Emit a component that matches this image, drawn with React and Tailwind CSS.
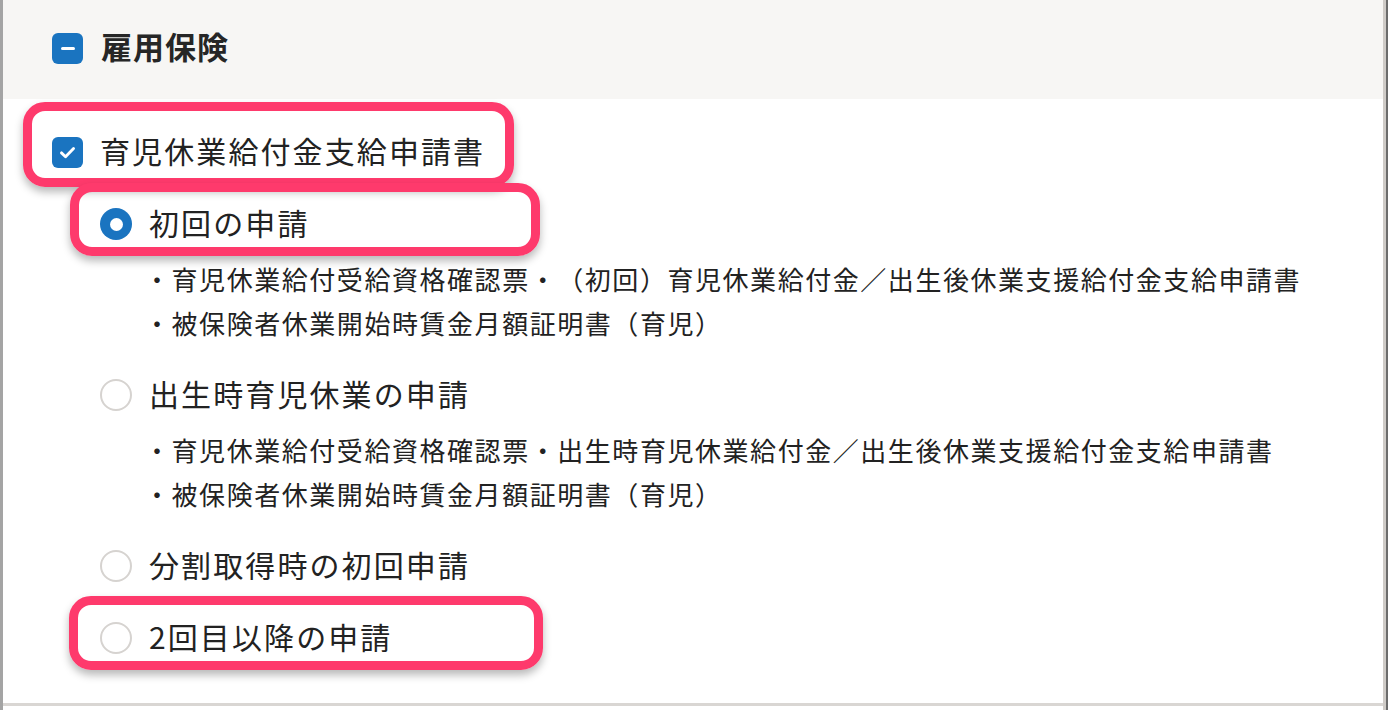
const font = { fontFamily: '"Noto Sans CJK JP", "Noto Sans", sans-serif' };

function Checkbox({ mode }) {
  return (
    <span className="w-[31px] h-[31px] shrink-0 rounded-[6px] bg-[#1a74c0] flex items-center justify-center">
      {mode === 'minus' ? (
        <span className="w-[14px] h-[3px] rounded-full bg-white" />
      ) : (
        <svg viewBox="0 0 16 16" className="w-[21px] h-[21px]" fill="none">
          <path d="M3.4 8.3 L6.5 11.2 L12.6 5" stroke="white" strokeWidth="2.2" strokeLinecap="round" strokeLinejoin="round" />
        </svg>
      )}
    </span>
  );
}

function Radio({ checked }) {
  return checked ? (
    <span className="w-[32px] h-[32px] shrink-0 rounded-full bg-[#1a74c0] flex items-center justify-center">
      <span className="w-[13px] h-[13px] rounded-full bg-white" />
    </span>
  ) : (
    <span className="w-[32px] h-[32px] shrink-0 rounded-full border-2 border-[#d6d3d0] bg-white" />
  );
}

function RadioRow({ checked, label }) {
  return (
    <div className="h-[72px] flex items-center gap-[17px] pl-[97px]">
      <Radio checked={checked} />
      <span className="pb-[4px] text-[30px] tracking-[2.1px] text-[#222]">{label}</span>
    </div>
  );
}

function Docs({ lines }) {
  return (
    <ul className="-mt-[3px] mb-[14px] pl-[141px] text-[26px] leading-[44px] tracking-[1.55px] text-[#222] [text-spacing-trim:space-all]">
      {lines.map((l) => (
        <li key={l}>・{l}</li>
      ))}
    </ul>
  );
}

function Mark({ className }) {
  return (
    <div
      className={`absolute border-[9px] border-[#fe3a6c] rounded-[22px] shadow-[0_5px_8px_rgba(0,0,0,0.28)] pointer-events-none ${className}`}
    />
  );
}

export default function App() {
  return (
    <div className="relative w-[1388px] h-[710px] overflow-hidden bg-[#6c6c6c] flex" style={font}>
      <div className="w-[3px] bg-[#a4a4a4]" />
      <div className="flex-1 flex flex-col bg-white">
        <div className="h-[99px] bg-[#f7f6f4] flex items-center gap-[18px] pl-[49px] pb-[2px]">
          <Checkbox mode="minus" />
          <span className="pb-[4px] text-[31px] font-bold tracking-[1px] text-[#262626]">雇用保険</span>
        </div>

        <div className="pt-[17px] flex-1">
          <div className="h-[72px] flex items-center gap-[17px] pl-[49px]">
            <Checkbox mode="check" />
            <span className="pb-[4px] text-[30px] tracking-[2.1px] text-[#222]">育児休業給付金支給申請書</span>
          </div>

          <RadioRow checked label="初回の申請" />
          <Docs
            lines={[
              '育児休業給付受給資格確認票・（初回）育児休業給付金／出生後休業支援給付金支給申請書',
              '被保険者休業開始時賃金月額証明書（育児）',
            ]}
          />

          <RadioRow label="出生時育児休業の申請" />
          <Docs
            lines={[
              '育児休業給付受給資格確認票・出生時育児休業給付金／出生後休業支援給付金支給申請書',
              '被保険者休業開始時賃金月額証明書（育児）',
            ]}
          />

          <RadioRow label="分割取得時の初回申請" />
          <RadioRow label="2回目以降の申請" />
        </div>

        <div className="h-[3px] bg-[#d9d6d3]" />
        <div className="h-[4px] bg-white" />
      </div>
      <div className="w-[3px] bg-[#cfcbc7]" />
      <div className="w-[2px] bg-[#6c6c6c]" />

      <Mark className="left-[23px] top-[102px] w-[491px] h-[85px]" />
      <Mark className="left-[70px] top-[183px] w-[470px] h-[73px]" />
      <Mark className="left-[69px] top-[596px] w-[474px] h-[74px]" />
    </div>
  );
}
